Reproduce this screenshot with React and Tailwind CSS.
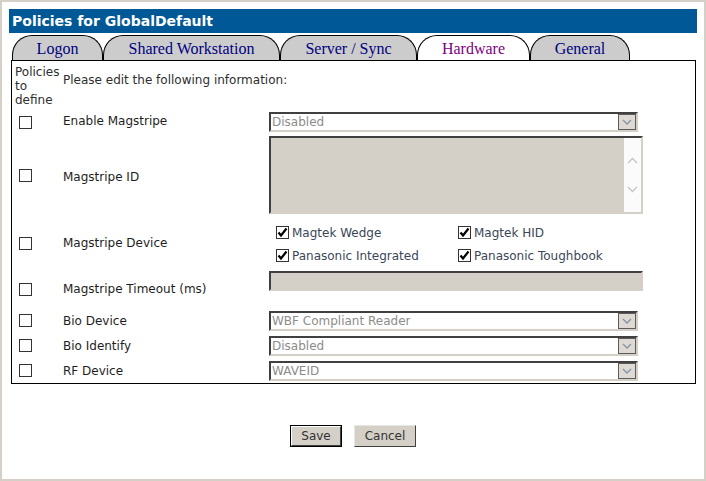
import React from 'react';

const sans = { fontFamily: '"DejaVu Sans", Verdana, sans-serif' };

function Check({ checked }) {
  return (
    <span className="w-[13px] h-[13px] shrink-0 border border-[#333] bg-white flex items-center justify-center">
      {checked && (
        <svg width="11" height="11" viewBox="0 0 11 11">
          <path d="M1.5 5.5 L4 8.5 L9.5 1.5" fill="none" stroke="#000" strokeWidth="2.2" />
        </svg>
      )}
    </span>
  );
}

function Select({ value }) {
  return (
    <div className="w-[369px] h-[20px] flex items-center border-2 border-t-[#404040] border-l-[#404040] border-b-[#d4d0c8] border-r-[#d4d0c8] bg-white">
      <span className="flex-1 pl-[1px] text-[12px] leading-[14px] text-[#8c8c8c]">{value}</span>
      <span className="w-[18px] h-[16px] border border-[#5c5c5c] bg-[#dedad3] flex items-center justify-center">
        <svg width="10" height="6" viewBox="0 0 10 6">
          <path d="M1 1 L5 5 L9 1" fill="none" stroke="#8593a8" strokeWidth="1.3" />
        </svg>
      </span>
    </div>
  );
}

function Row({ label, h, children, align = 'items-center', labelClass = '' }) {
  return (
    <div className={`flex ${align} ${h}`}>
      <div className={`w-[51px] pl-[7px] flex ${align === 'items-center' ? '' : 'self-center'}`}>
        <Check />
      </div>
      <div className={`w-[206px] text-[12px] leading-[14px] text-[#1e1e1e] ${align === 'items-center' ? '' : 'self-center'} ${labelClass}`}>
        {label}
      </div>
      <div>{children}</div>
    </div>
  );
}

const tabs = [
  { name: 'Logon', w: 'w-[91px]' },
  { name: 'Shared Workstation', w: 'w-[177px]' },
  { name: 'Server / Sync', w: 'w-[137px]' },
  { name: 'Hardware', w: 'w-[113px]', active: true },
  { name: 'General', w: 'w-[100px]' },
];

const devices = ['Magtek Wedge', 'Magtek HID', 'Panasonic Integrated', 'Panasonic Toughbook'];

export default function App() {
  return (
    <div className="w-[706px] h-[481px] border-2 border-[#d4d0c8] bg-white pt-[7px] px-[7px]" style={sans}>
      {/* title */}
      <div className="h-[24px] bg-[#005896] flex items-center pl-[3px] pt-[1px] text-white font-bold text-[14px]">
        Policies for GlobalDefault
      </div>

      {/* tabs */}
      <div className="mt-[2px] flex pl-[3px] h-[25px]">
        {tabs.map((t) => (
          <div
            key={t.name}
            className={`${t.w} h-[25px] pt-[1px] border border-b-0 border-black rounded-t-[20px] flex items-center justify-center text-[16px] ${
              t.active ? 'bg-white text-[#800080]' : 'bg-[#cccccc] text-[#000080]'
            }`}
            style={{ fontFamily: '"Liberation Serif", "Times New Roman", serif' }}
          >
            {t.name}
          </div>
        ))}
      </div>

      {/* content */}
      <div className="ml-[2px] mr-[1px] border border-black">
        <div className="h-[49px] flex items-start pt-[4px]">
          <div className="w-[51px] pl-[3px] text-[12px] leading-[14px] text-[#2e2e2e]">
            Policies
            <br />
            to
            <br />
            define
          </div>
          <div className="mt-[8px] text-[12px] leading-[14px] text-[#2e2e2e]">Please edit the following information:</div>
        </div>

        <Row label="Enable Magstripe" h="h-[24px]" labelClass="-mt-[3px]">
          <Select value="Disabled" />
        </Row>

        <Row label="Magstripe ID" h="h-[82px]" labelClass="mt-[3px]">
          <div className="w-[374px] h-[78px] flex border-2 border-t-[#404040] border-l-[#404040] border-b-[#d4d0c8] border-r-[#d4d0c8] bg-[#d4d0c8]">
            <div className="flex-1" />
            <div className="w-[17px] bg-[#fbfbfb] flex flex-col items-center justify-between py-[19px]">
              <svg width="11" height="7" viewBox="0 0 11 7">
                <path d="M1 6 L5.5 1.5 L10 6" fill="none" stroke="#c4c4c4" strokeWidth="1.3" />
              </svg>
              <svg width="11" height="7" viewBox="0 0 11 7">
                <path d="M1 1 L5.5 5.5 L10 1" fill="none" stroke="#c4c4c4" strokeWidth="1.3" />
              </svg>
            </div>
          </div>
        </Row>

        <Row label="Magstripe Device" h="h-[54px]">
          <div className="grid grid-cols-[182px_auto] pl-[7px] pt-[2px]">
            {devices.map((d) => (
              <div key={d} className="h-[23px] flex items-center gap-[3px]">
                <Check checked />
                <span className="text-[12px] leading-[14px] text-[#3b4658]">{d}</span>
              </div>
            ))}
          </div>
        </Row>

        <Row label="Magstripe Timeout (ms)" h="h-[38px]" align="items-start">
          <div className="pt-[1px]">
            <div className="w-[374px] h-[20px] border-2 border-t-[#404040] border-l-[#404040] border-b-[#d4d0c8] border-r-[#d4d0c8] bg-[#d4d0c8]" />
          </div>
        </Row>

        <Row label="Bio Device" h="h-[25px]">
          <Select value="WBF Compliant Reader" />
        </Row>
        <Row label="Bio Identify" h="h-[25px]">
          <Select value="Disabled" />
        </Row>
        <Row label="RF Device" h="h-[25px]">
          <Select value="WAVEID" />
        </Row>
      </div>

      {/* buttons */}
      <div className="mt-[41px] flex justify-center gap-[12px]">
        <button className="w-[52px] h-[22px] border border-black bg-[#d4d0c8] text-[12px] text-[#333]">
          <span className="w-full h-full flex items-center justify-center border border-t-white border-l-white border-b-[#404040] border-r-[#404040]">
            Save
          </span>
        </button>
        <button className="w-[62px] h-[22px] border border-t-[#e8e6e0] border-l-[#e8e6e0] border-b-[#404040] border-r-[#404040] bg-[#d4d0c8] text-[12px] text-[#333] flex items-center justify-center">
          Cancel
        </button>
      </div>
    </div>
  );
}
